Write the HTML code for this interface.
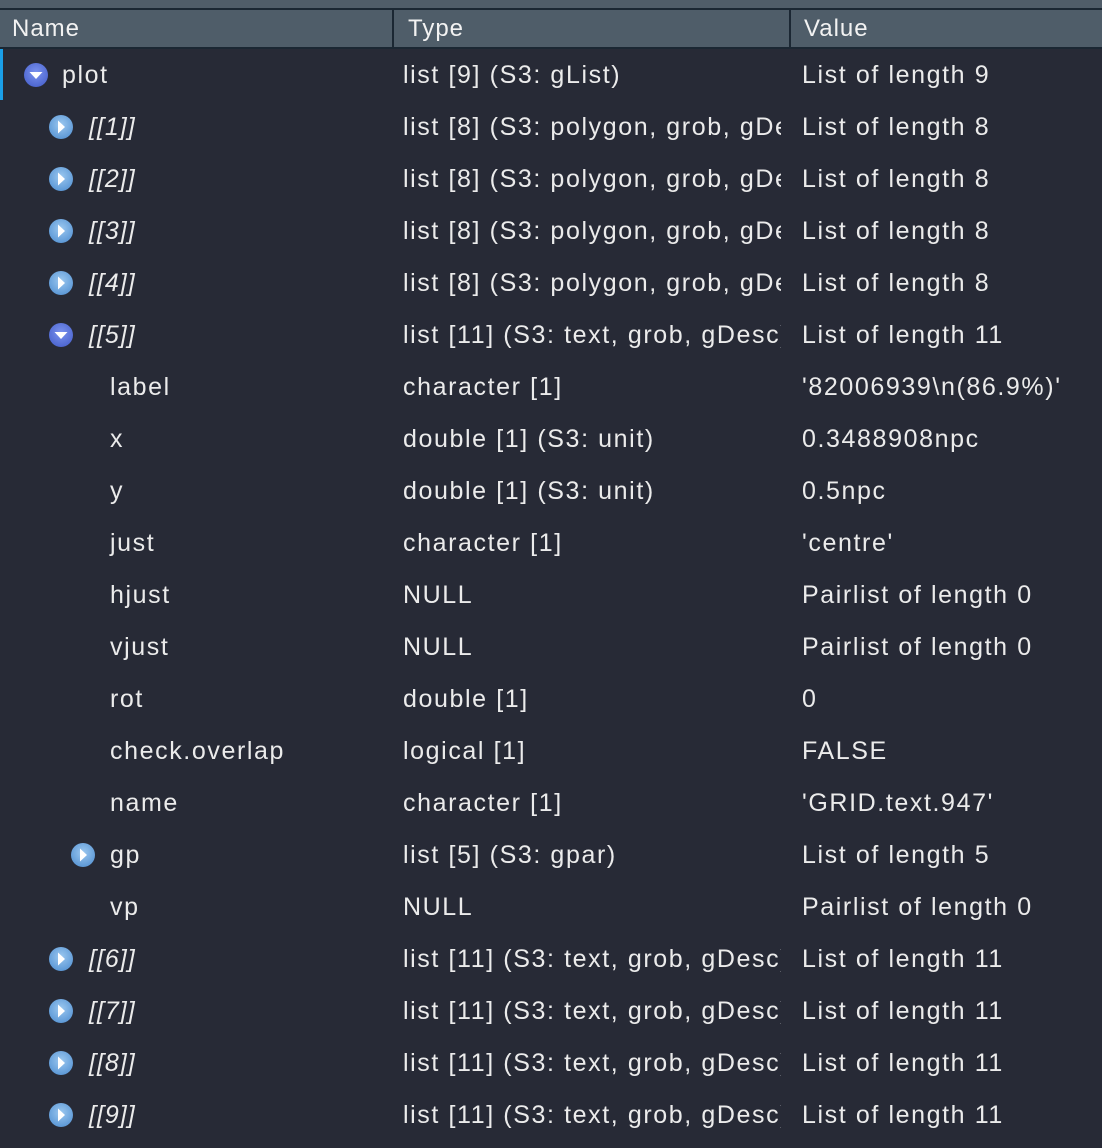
<!DOCTYPE html>
<html><head><meta charset="utf-8"><style>
*{margin:0;padding:0;box-sizing:border-box}
body{width:1102px;height:1148px;background:#272a36;overflow:hidden;position:relative;font-family:"Liberation Sans","DejaVu Sans",sans-serif;color:#ebebeb;font-size:25px;letter-spacing:1.6px}
.top{position:absolute;left:0;top:0;width:1102px;height:8px;background:#505d69}
.hl{position:absolute;left:0;width:1102px;height:2px;background:#1b2733}
.hdr{position:absolute;left:0;top:10px;width:1102px;height:37px;background:#4f5d69}
.vd{position:absolute;top:10px;width:2px;height:37px;background:#1b2733}
.h{position:absolute;top:15px;font-size:24px;color:#f2f2f2;letter-spacing:1px}
.t{position:absolute;white-space:nowrap;line-height:30px}
.it{font-style:italic;letter-spacing:1px}
.ic{position:absolute;width:26px;height:26px}
.clip{position:absolute;left:403px;width:378px;overflow:hidden;white-space:nowrap;line-height:30px}
.sel{position:absolute;left:0;top:49px;width:3px;height:51px;background:#1a9fe8}
</style></head><body>
<div class="top"></div><div class="hl" style="top:8px"></div><div class="hdr"></div><div class="hl" style="top:47px"></div>
<div class="vd" style="left:392px"></div><div class="vd" style="left:789px"></div>
<div class="h" style="left:12px">Name</div><div class="h" style="left:408px">Type</div><div class="h" style="left:804px">Value</div>
<div class="sel"></div>
<svg width="0" height="0" style="position:absolute"><defs>
<radialGradient id="gd" cx="50%" cy="40%" r="60%"><stop offset="0" stop-color="#7b93ee"/><stop offset="1" stop-color="#4d66d0"/></radialGradient>
<radialGradient id="gr" cx="50%" cy="40%" r="60%"><stop offset="0" stop-color="#9cc8f0"/><stop offset="1" stop-color="#5c98d6"/></radialGradient>
<symbol id="down" viewBox="0 0 26 26"><circle cx="13" cy="13" r="12" fill="url(#gd)"/><path d="M6.5 10h13l-6.5 7z" fill="#fff"/></symbol>
<symbol id="right" viewBox="0 0 26 26"><circle cx="13" cy="13" r="12" fill="url(#gr)"/><path d="M10 6.5v13l7-6.5z" fill="#fff"/></symbol>
</defs></svg>
<div id="rows"></div>
<script>
var R=[
["down",23,62,"plot",0,"list [9] (S3: gList)","List of length 9"],
["right",48,89,"[[1]]",1,"list [8] (S3: polygon, grob, gDesc)","List of length 8"],
["right",48,89,"[[2]]",1,"list [8] (S3: polygon, grob, gDesc)","List of length 8"],
["right",48,89,"[[3]]",1,"list [8] (S3: polygon, grob, gDesc)","List of length 8"],
["right",48,89,"[[4]]",1,"list [8] (S3: polygon, grob, gDesc)","List of length 8"],
["down",48,89,"[[5]]",1,"list [11] (S3: text, grob, gDesc)","List of length 11"],
["",0,110,"label",0,"character [1]","'82006939\\n(86.9%)'"],
["",0,110,"x",0,"double [1] (S3: unit)","0.3488908npc"],
["",0,110,"y",0,"double [1] (S3: unit)","0.5npc"],
["",0,110,"just",0,"character [1]","'centre'"],
["",0,110,"hjust",0,"NULL","Pairlist of length 0"],
["",0,110,"vjust",0,"NULL","Pairlist of length 0"],
["",0,110,"rot",0,"double [1]","0"],
["",0,110,"check.overlap",0,"logical [1]","FALSE"],
["",0,110,"name",0,"character [1]","'GRID.text.947'"],
["right",70,110,"gp",0,"list [5] (S3: gpar)","List of length 5"],
["",0,110,"vp",0,"NULL","Pairlist of length 0"],
["right",48,89,"[[6]]",1,"list [11] (S3: text, grob, gDesc)","List of length 11"],
["right",48,89,"[[7]]",1,"list [11] (S3: text, grob, gDesc)","List of length 11"],
["right",48,89,"[[8]]",1,"list [11] (S3: text, grob, gDesc)","List of length 11"],
["right",48,89,"[[9]]",1,"list [11] (S3: text, grob, gDesc)","List of length 11"]];
var h="";
R.forEach(function(r,i){var cy=75+52*i,ty=cy-15;
if(r[0])h+='<svg class="ic" style="left:'+r[1]+'px;top:'+(cy-13)+'px"><use href="#'+r[0]+'"/></svg>';
h+='<div class="t'+(r[4]?' it':'')+'" style="left:'+r[2]+'px;top:'+ty+'px">'+r[3]+'</div>';
h+='<div class="clip" style="top:'+ty+'px">'+r[5]+'</div>';
h+='<div class="t" style="left:802px;top:'+ty+'px">'+r[6]+'</div>';});
document.getElementById("rows").innerHTML=h;
</script>
</body></html>
